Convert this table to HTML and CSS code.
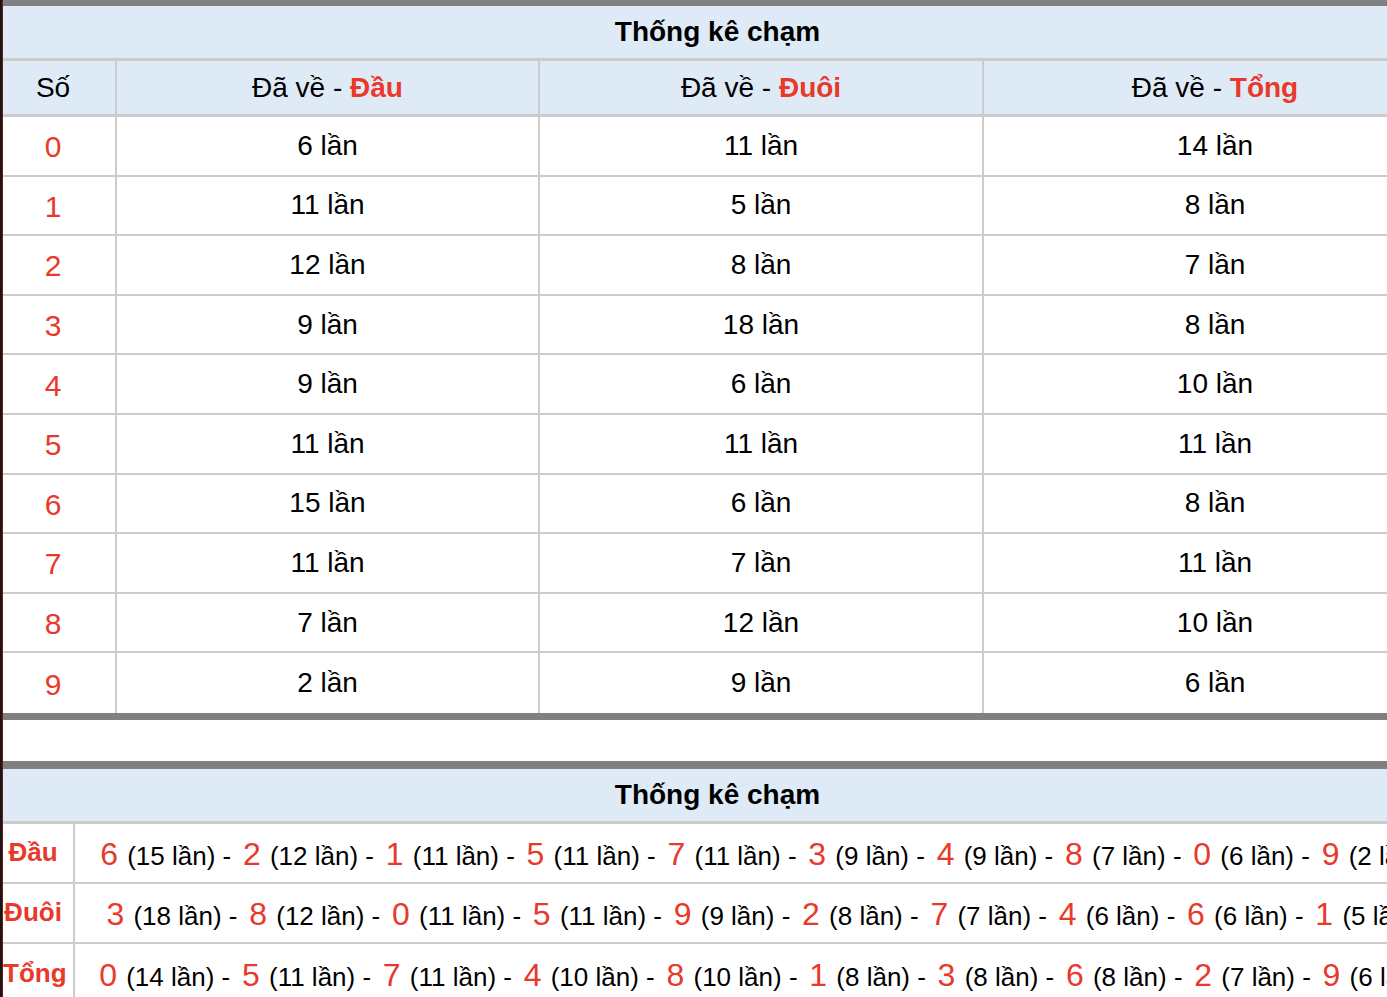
FILE: index.html
```html
<!DOCTYPE html>
<html lang="vi">
<head>
<meta charset="utf-8">
<title>Thống kê chạm</title>
<link rel="stylesheet" href="styles.css">
</head>
<body>
<div class="frame">
  <table class="stat stat-cham">
    <colgroup>
      <col class="w-num"><col class="w-dau"><col class="w-duoi"><col class="w-tong">
    </colgroup>
    <thead>
      <tr><th colspan="4" class="title">Thống kê chạm</th></tr>
      <tr class="head">
        <th class="c-num">Số</th>
        <th>Đã về - <span class="hl">Đầu</span></th>
        <th>Đã về - <span class="hl">Đuôi</span></th>
        <th class="last">Đã về - <span class="hl">Tổng</span></th>
      </tr>
    </thead>
    <tbody>
      <tr><td class="c-num num">0</td><td>6 lần</td><td>11 lần</td><td class="last">14 lần</td></tr>
      <tr><td class="c-num num">1</td><td>11 lần</td><td>5 lần</td><td class="last">8 lần</td></tr>
      <tr><td class="c-num num">2</td><td>12 lần</td><td>8 lần</td><td class="last">7 lần</td></tr>
      <tr><td class="c-num num">3</td><td>9 lần</td><td>18 lần</td><td class="last">8 lần</td></tr>
      <tr><td class="c-num num">4</td><td>9 lần</td><td>6 lần</td><td class="last">10 lần</td></tr>
      <tr><td class="c-num num">5</td><td>11 lần</td><td>11 lần</td><td class="last">11 lần</td></tr>
      <tr><td class="c-num num">6</td><td>15 lần</td><td>6 lần</td><td class="last">8 lần</td></tr>
      <tr><td class="c-num num">7</td><td>11 lần</td><td>7 lần</td><td class="last">11 lần</td></tr>
      <tr><td class="c-num num">8</td><td>7 lần</td><td>12 lần</td><td class="last">10 lần</td></tr>
      <tr class="end"><td class="c-num num">9</td><td>2 lần</td><td>9 lần</td><td class="last">6 lần</td></tr>
    </tbody>
  </table>

  <table class="stat stat-order">
    <colgroup>
      <col class="w-label"><col class="w-list">
    </colgroup>
    <thead>
      <tr><th colspan="2" class="title">Thống kê chạm</th></tr>
    </thead>
    <tbody>
      <tr>
        <td class="label">Đầu</td>
        <td class="list"><span class="d">6</span> (15 lần) - <span class="d">2</span> (12 lần) - <span class="d">1</span> (11 lần) - <span class="d">5</span> (11 lần) - <span class="d">7</span> (11 lần) - <span class="d">3</span> (9 lần) - <span class="d">4</span> (9 lần) - <span class="d">8</span> (7 lần) - <span class="d">0</span> (6 lần) - <span class="d">9</span> (2 lần)</td>
      </tr>
      <tr>
        <td class="label">Đuôi</td>
        <td class="list"><span class="d">3</span> (18 lần) - <span class="d">8</span> (12 lần) - <span class="d">0</span> (11 lần) - <span class="d">5</span> (11 lần) - <span class="d">9</span> (9 lần) - <span class="d">2</span> (8 lần) - <span class="d">7</span> (7 lần) - <span class="d">4</span> (6 lần) - <span class="d">6</span> (6 lần) - <span class="d">1</span> (5 lần)</td>
      </tr>
      <tr class="end">
        <td class="label">Tổng</td>
        <td class="list"><span class="d">0</span> (14 lần) - <span class="d">5</span> (11 lần) - <span class="d">7</span> (11 lần) - <span class="d">4</span> (10 lần) - <span class="d">8</span> (10 lần) - <span class="d">1</span> (8 lần) - <span class="d">3</span> (8 lần) - <span class="d">6</span> (8 lần) - <span class="d">2</span> (7 lần) - <span class="d">9</span> (6 lần)</td>
      </tr>
    </tbody>
  </table>
</div>
</body>
</html>
```
FILE: styles.css
```css
html, body {
  margin: 0;
  padding: 0;
  background: #ffffff;
}

body {
  font-family: "Liberation Sans", Arial, Helvetica, sans-serif;
  color: #000000;
  overflow: hidden;
}

.frame {
  width: 1384px;
  min-height: 997px;
  border-left: 2px solid #1c1515;
  padding-left: 1px;
  box-shadow: inset 1px 0 0 #6e1c1c;
  overflow: hidden;
}

.stat {
  border-collapse: separate;
  border-spacing: 0;
  table-layout: fixed;
}

.stat th,
.stat td {
  padding: 0;
  text-align: center;
  vertical-align: middle;
  white-space: nowrap;
  box-sizing: border-box;
}

.stat .title {
  background: #deebf6;
  height: 55px;
  line-height: 52px;
  font-size: 28px;
  font-weight: bold;
  border-bottom: 3px solid #cccccc;
}

/* ---------- table 1 ---------- */

.stat-cham {
  width: 1443px;
  border-top: 6px solid #808080;
  border-bottom: 7px solid #808080;
  margin-bottom: 41px;
}

.stat-cham .title {
  padding-right: 14px;
}

.w-num { width: 114px; }
.w-dau { width: 423px; }
.w-duoi { width: 444px; }
.w-tong { width: 462px; }

.head th {
  background: #deebf6;
  height: 56px;
  font-size: 28px;
  font-weight: normal;
  border-bottom: 3px solid #cccccc;
  border-right: 2px solid #cccccc;
}

.head th.last,
.stat td.last {
  border-right: 0;
}

.hl {
  color: #e8392b;
  font-weight: bold;
}

.stat-cham td {
  height: 59.6px;
  font-size: 28px;
  border-bottom: 2px solid #cccccc;
  border-right: 2px solid #cccccc;
}

.stat-cham tr.end td {
  border-bottom: 0;
}

.stat .c-num {
  padding-right: 12px;
}

.stat-cham td.num {
  color: #e8392b;
  font-size: 30px;
  padding-top: 3px;
}

/* ---------- table 2 ---------- */

.stat-order {
  width: 1440px;
  border-top: 8px solid #808080;
}

.stat-order .title {
  padding-right: 11px;
}

.w-label { width: 72px; }
.w-list { width: 1368px; }

.stat-order td {
  height: 60px;
  border-bottom: 2px solid #cccccc;
}

.stat-order tr.end td {
  border-bottom: 0;
}

.stat-order td.label {
  color: #e8392b;
  font-size: 26px;
  font-weight: bold;
  border-right: 2px solid #cccccc;
  padding-right: 10px;
}

.stat-order td.list {
  font-size: 26px;
  padding-top: 4px;
}

.d {
  color: #e8392b;
  font-size: 32px;
  margin: 0 2px 0 4.5px;
}
```
